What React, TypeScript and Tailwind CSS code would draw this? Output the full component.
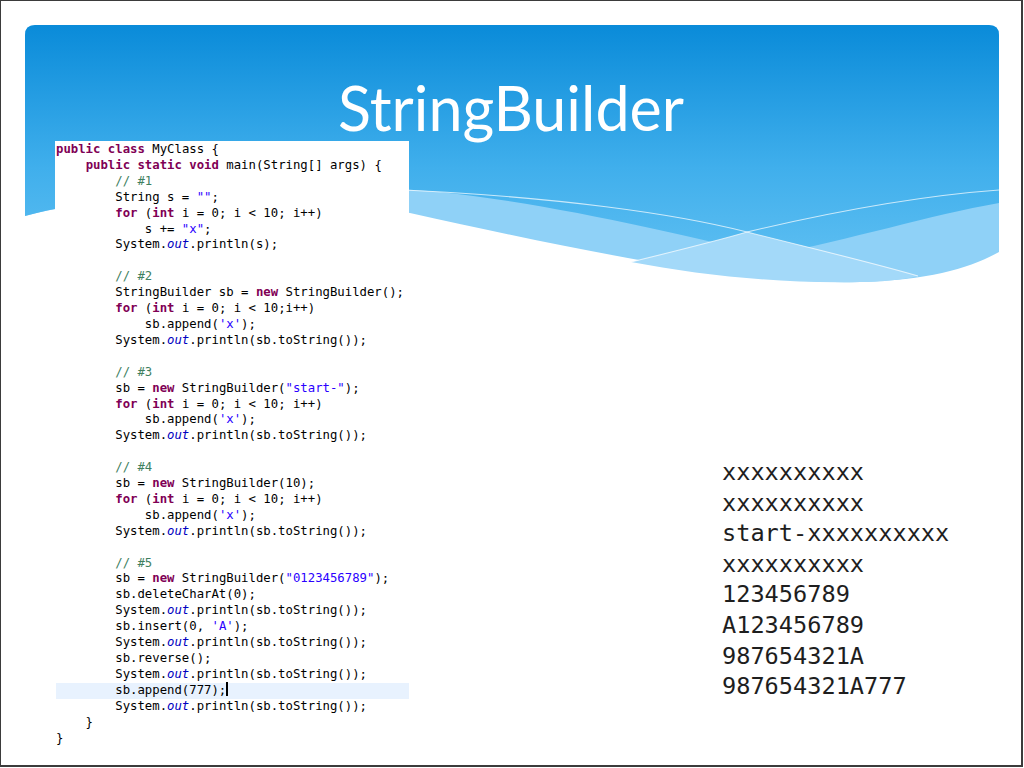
import React from 'react';

const code = [
  'public class MyClass {',
  '    public static void main(String[] args) {',
  '        // #1',
  '        String s = "";',
  '        for (int i = 0; i < 10; i++)',
  '            s += "x";',
  '        System.out.println(s);',
  '',
  '        // #2',
  '        StringBuilder sb = new StringBuilder();',
  '        for (int i = 0; i < 10;i++)',
  "            sb.append('x');",
  '        System.out.println(sb.toString());',
  '',
  '        // #3',
  '        sb = new StringBuilder("start-");',
  '        for (int i = 0; i < 10; i++)',
  "            sb.append('x');",
  '        System.out.println(sb.toString());',
  '',
  '        // #4',
  '        sb = new StringBuilder(10);',
  '        for (int i = 0; i < 10; i++)',
  "            sb.append('x');",
  '        System.out.println(sb.toString());',
  '',
  '        // #5',
  '        sb = new StringBuilder("0123456789");',
  '        sb.deleteCharAt(0);',
  '        System.out.println(sb.toString());',
  "        sb.insert(0, 'A');",
  '        System.out.println(sb.toString());',
  '        sb.reverse();',
  '        System.out.println(sb.toString());',
  '        sb.append(777);',
  '        System.out.println(sb.toString());',
  '    }',
  '}',
];

const output = [
  'xxxxxxxxxx',
  'xxxxxxxxxx',
  'start-xxxxxxxxxx',
  'xxxxxxxxxx',
  '123456789',
  'A123456789',
  '987654321A',
  '987654321A777',
];

const tokenRe = /(\/\/.*$)|("[^"]*"|'[^']*')|\b(public|class|static|void|new|for|int)\b|\b(out)\b/g;

function highlight(line: string) {
  const parts: React.ReactNode[] = [];
  let last = 0;
  let m: RegExpExecArray | null;
  tokenRe.lastIndex = 0;
  while ((m = tokenRe.exec(line))) {
    if (m.index > last) parts.push(line.slice(last, m.index));
    if (m[1]) parts.push(<span key={m.index} className="text-[#3f7f5f]">{m[1]}</span>);
    else if (m[2]) parts.push(<span key={m.index} className="text-[#2a00ff]">{m[2]}</span>);
    else if (m[3]) parts.push(<span key={m.index} className="text-[#7f0055] font-bold">{m[3]}</span>);
    else parts.push(<span key={m.index} className="text-[#0000c0] italic">{m[4]}</span>);
    last = m.index + m[0].length;
  }
  if (last < line.length) parts.push(line.slice(last));
  return parts;
}

const HeaderWave = () => (
  <svg
    className="absolute left-[24px] top-[24px]"
    width="974"
    height="265"
    viewBox="25 25 974 265"
  >
    <defs>
      <linearGradient id="hdr" x1="0" y1="25" x2="0" y2="285" gradientUnits="userSpaceOnUse">
        <stop offset="0" stopColor="#0a8bd9" />
        <stop offset="0.55" stopColor="#40afec" />
        <stop offset="1" stopColor="#64c2f3" />
      </linearGradient>
    </defs>
    {/* light band under the wave */}
    <path
      d="M25,35 Q25,25 35,25 H989 Q999,25 999,35 V252 C970,268 930,280 860,282 C750,285 600,255 410,213 C250,195 100,195 25,216 Z"
      fill="#8fd1f7"
    />
    {/* main blue */}
    <path
      d="M25,35 Q25,25 35,25 H989 Q999,25 999,35 V203 C930,215 850,240 770,255 C680,235 560,205 440,192 C300,180 120,190 25,216 Z"
      fill="url(#hdr)"
    />
    {/* lightest wedge */}
    <path
      d="M631,262 C680,250 720,240 747,232 C810,248 870,262 918,276 C900,280 880,282 860,282 C780,284 700,275 631,262 Z"
      fill="#a3d9f9"
    />
    <path
      d="M380,189 C560,196 680,215 747,232 C810,248 870,262 918,276"
      fill="none"
      stroke="#ffffff"
      strokeOpacity="0.7"
      strokeWidth="1.1"
    />
    <path
      d="M631,262 C680,250 720,240 747,232 C840,210 930,195 999,190"
      fill="none"
      stroke="#ffffff"
      strokeOpacity="0.7"
      strokeWidth="1.1"
    />
  </svg>
);

export default function App() {
  return (
    <div className="relative w-[1023px] h-[767px] bg-white border border-r-2 border-b-2 border-[#3b3b3b] overflow-hidden">
      <HeaderWave />

      <div className="relative flex flex-col">
        {/* title */}
        <div className="h-[140px] pt-[77px]">
          <h1 className="text-center text-white text-[61px] leading-[60px] font-normal font-['Lato',sans-serif]">
            StringBuilder
          </h1>
        </div>

        <div className="flex items-start">
          {/* code listing */}
          <div className="ml-[54px] w-[354px] bg-white pl-[1px] pt-[1px] font-['DejaVu_Sans_Mono',monospace] text-[12.3px] leading-[15.92px] text-black">
            {code.map((line, i) => (
              <div
                key={i}
                className={`h-[15.92px] whitespace-pre ${i === 34 ? 'bg-[#e8f2fe]' : ''}`}
              >
                {highlight(line)}
                {i === 34 && <span className="inline-block w-[1.5px] h-[14px] bg-black align-middle -mt-[2px]" />}
              </div>
            ))}
          </div>

          {/* console output */}
          <div className="ml-[313px] mt-[316px] font-['DejaVu_Sans_Mono',monospace] text-[23.6px] leading-[30.6px] text-[#1e1e1e]">
            {output.map((l, i) => (
              <div key={i} className="whitespace-pre">{l}</div>
            ))}
          </div>
        </div>
      </div>
    </div>
  );
}
